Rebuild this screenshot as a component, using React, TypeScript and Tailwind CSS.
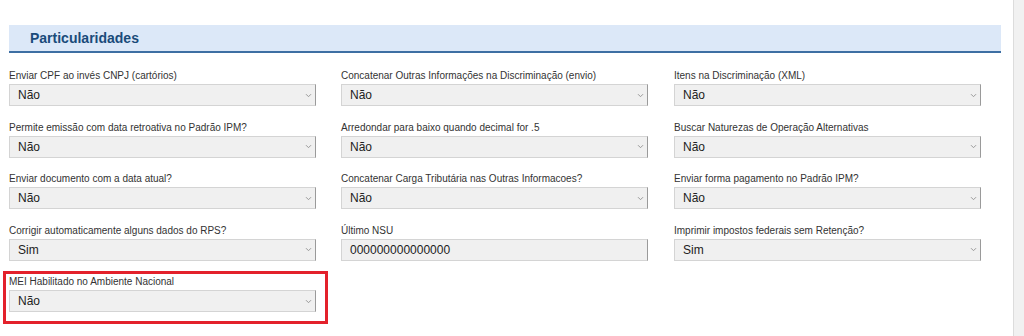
import React from "react";

type Field = { label: string; value: string; kind?: "select" | "input" };

const rows: Field[][] = [
  [
    { label: "Enviar CPF ao invés CNPJ (cartórios)", value: "Não" },
    { label: "Concatenar Outras Informações na Discriminação (envio)", value: "Não" },
    { label: "Itens na Discriminação (XML)", value: "Não" },
  ],
  [
    { label: "Permite emissão com data retroativa no Padrão IPM?", value: "Não" },
    { label: "Arredondar para baixo quando decimal for .5", value: "Não" },
    { label: "Buscar Naturezas de Operação Alternativas", value: "Não" },
  ],
  [
    { label: "Enviar documento com a data atual?", value: "Não" },
    { label: "Concatenar Carga Tributária nas Outras Informacoes?", value: "Não" },
    { label: "Enviar forma pagamento no Padrão IPM?", value: "Não" },
  ],
  [
    { label: "Corrigir automaticamente alguns dados do RPS?", value: "Sim" },
    { label: "Último NSU", value: "000000000000000", kind: "input" },
    { label: "Imprimir impostos federais sem Retenção?", value: "Sim" },
  ],
];

function Chevron() {
  return (
    <svg width="7" height="5" viewBox="0 0 7 5" className="shrink-0">
      <path d="M1 1.2 L3.5 3.7 L6 1.2" fill="none" stroke="#999" strokeWidth="1" />
    </svg>
  );
}

function FieldBox({ f }: { f: Field }) {
  return (
    <div className="flex w-[307px] flex-col">
      <div className="h-[15px] text-[10px] leading-[15px] text-[#333]">{f.label}</div>
      <div className="mt-[1px] flex h-[22px] items-center justify-between border border-[#d4d4d4] border-r-[#9a9a9a] bg-[#f0f0f0] pl-[8px] pr-[3px] text-[12px] text-[#222]">
        <span>{f.value}</span>
        {f.kind !== "input" && <Chevron />}
      </div>
    </div>
  );
}

export default function App() {
  return (
    <div
      className="flex h-[336px] w-[1024px] overflow-hidden bg-white"
      style={{ fontFamily: '"Liberation Sans", Arial, sans-serif' }}
    >
      <div className="flex-1 pl-[9px] pr-[12px] pt-[25px]">
        <div className="flex h-[28px] items-center border-b-2 border-[#3d6fa3] bg-[#dce8f8] pl-[21px]">
          <span className="text-[14px] font-bold text-[#1a4b7a]">Particularidades</span>
        </div>
        <div className="mt-[15px] flex flex-col gap-[13.5px]">
          {rows.map((r, i) => (
            <div key={i} className="grid grid-cols-[332px_333px_1fr]">
              {r.map((f, j) => (
                <FieldBox key={j} f={f} />
              ))}
            </div>
          ))}
          <div className="grid grid-cols-[332px_333px_1fr]">
            <div className="relative">
              <span className="pointer-events-none absolute -left-[6px] -top-[3px] h-[53px] w-[325px] border-[3px] border-[#e3212b]" />
              <FieldBox f={{ label: "MEI Habilitado no Ambiente Nacional", value: "Não" }} />
            </div>
          </div>
        </div>
      </div>
      <div className="w-[11px] border-l border-[#dcdcdc] bg-[#f1f1f1]" />
    </div>
  );
}
